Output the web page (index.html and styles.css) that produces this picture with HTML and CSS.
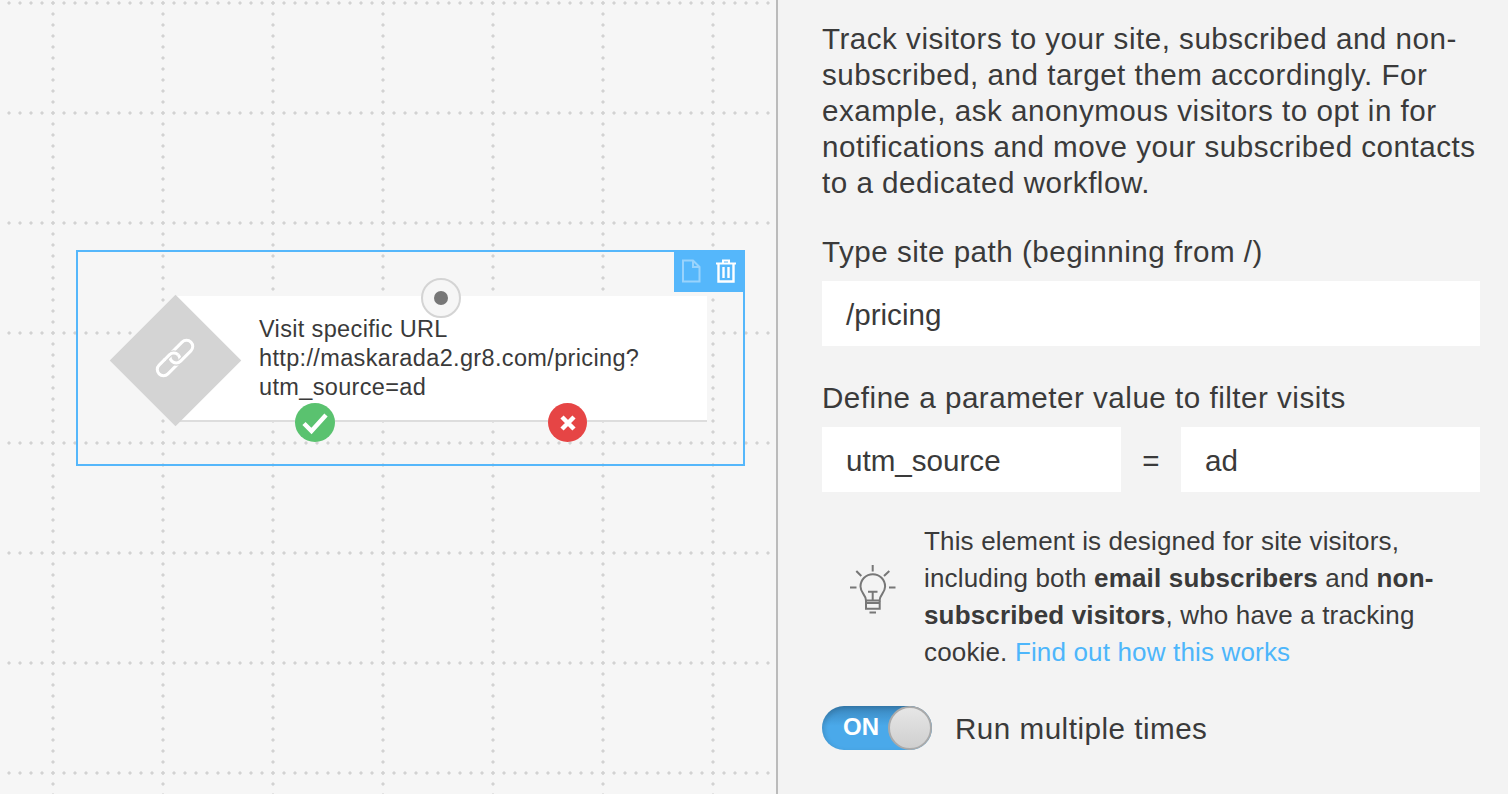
FILE: index.html
```html
<!DOCTYPE html>
<html lang="en">
<head>
    <meta charset="UTF-8">
    <meta name="viewport" content="width=device-width, initial-scale=1.0">
    <title>Workflow editor</title>
    <link rel="stylesheet" href="styles.css">
</head>
<body>
    <div class="editor">
        <div class="canvas">
            <div class="node-frame">
                <div class="node-tools">
                    <svg class="tool-icon tool-copy" width="20" height="24" viewBox="0 0 20 24">
                        <path d="M2 1.500h10l6.500 6.500v14.500h-16.500z M12 1.500v6.500h6.500" fill="none" stroke="#fff" stroke-width="2"/>
                    </svg>
                    <svg class="tool-icon" width="22" height="24" viewBox="0 0 22 24">
                        <path d="M1 4.500h20M8 4v-2.500h6v2.500" fill="none" stroke="#fff" stroke-width="2"/>
                        <path d="M3.500 5v17.500h15v-17.500M8.500 8v11M13.500 8v11" fill="none" stroke="#fff" stroke-width="2.400"/>
                    </svg>
                </div>
                <div class="node-card">
                    <p class="node-text">Visit specific URL<br>http://maskarada2.gr8.com/pricing?<br>utm_source=ad</p>
                </div>
                <div class="node-diamond"></div>
                <svg class="node-link" width="44" height="44" viewBox="-22 -22 44 44">
                    <g transform="rotate(-45)" fill="none" stroke-width="3">
                        <rect x="-22.500" y="-6.250" width="27" height="12.500" rx="6.250" stroke="#fff"/>
                        <rect x="-4.500" y="-6.250" width="27" height="12.500" rx="6.250" stroke="#d4d4d4" stroke-width="5.500"/>
                        <rect x="-4.500" y="-6.250" width="27" height="12.500" rx="6.250" stroke="#fff"/>
                        <path d="M-8 -6.250h6.250a6.250 6.250 0 0 1 6.250 6.250" stroke="#d4d4d4" stroke-width="5.500"/>
                        <path d="M-9 -6.250h7.250a6.250 6.250 0 0 1 6.250 6.250" stroke="#fff"/>
                    </g>
                </svg>
                <div class="port port-in"><span class="port-dot"></span></div>
                <div class="port port-yes">
                    <svg width="28" height="24" viewBox="0 0 28 24"><path d="M3 12.500l7.500 7.500 14.500-16" fill="none" stroke="#fff" stroke-width="4.500"/></svg>
                </div>
                <div class="port port-no">
                    <svg width="18" height="18" viewBox="0 0 18 18"><path d="M3 3l12 12M15 3l-12 12" fill="none" stroke="#fff" stroke-width="4.500"/></svg>
                </div>
            </div>
        </div>

        <div class="panel">
            <p class="panel-intro">Track visitors to your site, subscribed and non-subscribed, and target them accordingly. For example, ask anonymous visitors to opt in for notifications and move your subscribed contacts to a dedicated workflow.</p>

            <label class="field-label">Type site path (beginning from /)</label>
            <div class="field-box">/pricing</div>

            <label class="field-label field-label-second">Define a parameter value to filter visits</label>
            <div class="param-row">
                <div class="field-box">utm_source</div>
                <span class="param-eq">=</span>
                <div class="field-box">ad</div>
            </div>

            <div class="hint">
                <svg class="hint-icon" width="48" height="49" viewBox="0 0 48 49" fill="none" stroke="#777" stroke-width="2">
                    <path d="M23.700 0v6.500M7.300 6l5 5M40.300 6l-5.300 5M1 22.500h6.500M40 22.500h6.500"/>
                    <path d="M17 35.500c0-6-5.500-7.500-5.500-14a12.300 12.300 0 0 1 24.600 0c0 6.500-5.500 8-5.500 14z"/>
                    <path d="M19 26.700h9.500M23.700 26.700v8.800M17 35.500v8.200h13.700v-8.200M17 38h13.700M20.500 47.500h6.500"/>
                </svg>
                <p class="hint-text">This element is designed for site visitors, including both <b>email subscribers</b> and <b>non-subscribed visitors</b>, who have a tracking cookie. <a href="#" class="hint-link">Find out how this works</a></p>
            </div>

            <div class="toggle-row">
                <div class="toggle">
                    <span class="toggle-label">ON</span>
                    <span class="toggle-knob"></span>
                </div>
                <span class="toggle-text">Run multiple times</span>
            </div>
        </div>
    </div>
</body>
</html>
```

FILE: styles.css
```css
html, body {
    margin: 0;
    padding: 0;
    height: 794px;
    overflow: hidden;
}
body {
    font-family: 'Liberation Sans', Arial, sans-serif;
    color: #3a3a3a;
    background-color: #f3f3f3;
}
.editor {
    display: flex;
    height: 794px;
}
.canvas {
    position: relative;
    width: 776px;
    flex: none;
    border-right: 2px solid #bbb;
    background-color: #f6f6f6;
    background-image:
        radial-gradient(circle at 2px 2px, #d2d2d2 1.2px, transparent 2px),
        radial-gradient(circle at 2px 2px, #d2d2d2 1.2px, transparent 2px);
    background-size: 11px 110px, 110px 11px;
    background-position: 7px 1px, 51px 1px;
}
.node-frame {
    position: absolute;
    left: 76px;
    top: 250px;
    width: 665px;
    height: 212px;
    border: 2px solid #55b7fb;
}
.node-tools {
    position: absolute;
    top: -2px;
    right: -2px;
    width: 71px;
    height: 42px;
    background-color: #55b7fb;
    display: flex;
    align-items: center;
    justify-content: flex-end;
    gap: 14px;
    padding-right: 8px;
    box-sizing: border-box;
}
.tool-copy {
    opacity: 0.4;
}
.node-card {
    position: absolute;
    left: 98px;
    top: 44px;
    width: 531px;
    height: 124px;
    background-color: #fff;
    border-bottom: 2px solid #ddd;
}
.node-text {
    margin: 19px 0 0 83px;
    font-size: 23.500px;
    letter-spacing: 0.350px;
    line-height: 29px;
}
.node-diamond {
    position: absolute;
    left: 51px;
    top: 62px;
    width: 93px;
    height: 93px;
    background-color: #d4d4d4;
    transform: rotate(45deg);
}
.node-link {
    position: absolute;
    left: 75px;
    top: 84px;
}
.port {
    position: absolute;
    width: 40px;
    height: 40px;
    border-radius: 50%;
    box-sizing: border-box;
    display: flex;
    align-items: center;
    justify-content: center;
}
.port-in {
    left: 343px;
    top: 26px;
    background-color: #f6f6f6;
    border: 2px solid #d4d4d4;
}
.port-dot {
    width: 14px;
    height: 14px;
    border-radius: 50%;
    background-color: #777;
}
.port-yes {
    left: 217px;
    top: 151px;
    height: 39px;
    background-color: #5ac26f;
}
.port-no {
    left: 470px;
    top: 151px;
    width: 39px;
    height: 39px;
    background-color: #e64545;
}
.panel {
    flex: 1;
    padding: 21px 28px 0 44px;
}
.panel-intro {
    margin: 0;
    font-size: 29.600px;
    letter-spacing: 0.500px;
    line-height: 36px;
}
.field-label {
    display: block;
    margin-top: 33px;
    font-size: 29.600px;
    letter-spacing: 0.500px;
    line-height: 36px;
}
.field-label-second {
    margin-top: 34px;
}
.field-box {
    margin-top: 11px;
    height: 65px;
    line-height: 68px;
    padding-left: 24px;
    background-color: #fff;
    font-size: 29.600px;
}
.param-row {
    display: flex;
    align-items: flex-start;
}
.param-row .field-box {
    flex: 1;
}
.param-eq {
    width: 60px;
    flex: none;
    margin-top: 11px;
    line-height: 68px;
    font-size: 29.600px;
    text-align: center;
}
.hint {
    display: flex;
    margin-top: 28px;
}
.hint-icon {
    flex: none;
    margin: 42px 0 0 27px;
}
.hint-text {
    margin: 0 0 0 27px;
    font-size: 26px;
    letter-spacing: 0.160px;
    line-height: 37px;
}
.hint-link {
    color: #4db6fb;
    text-decoration: none;
}
.toggle-row {
    display: flex;
    align-items: center;
    margin-top: 35px;
}
.toggle {
    position: relative;
    width: 110px;
    height: 44px;
    border-radius: 22px;
    background: linear-gradient(#3a86bd, #4aa9ea 45%);
    box-shadow: inset 2px 2px 5px rgba(0, 0, 0, 0.15);
}
.toggle-label {
    position: absolute;
    left: 21px;
    top: -1px;
    line-height: 44px;
    font-size: 24px;
    font-weight: bold;
    color: #fff;
}
.toggle-knob {
    position: absolute;
    right: 0;
    top: 0;
    width: 44px;
    height: 44px;
    box-sizing: border-box;
    border-radius: 50%;
    border: 2px solid #aaa;
    background: linear-gradient(#e6e6e6, #cfcfcf);
}
.toggle-text {
    margin-left: 23px;
    padding-top: 2px;
    font-size: 29.600px;
    letter-spacing: 0.500px;
}
```
